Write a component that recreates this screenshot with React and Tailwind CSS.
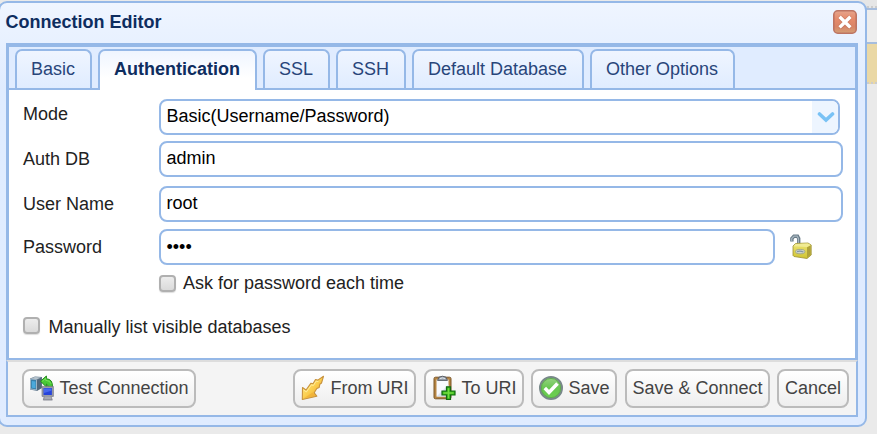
import React from "react";

const TABS = [
  { label: "Basic", size: "w-[77px]" },
  { label: "Authentication", size: "w-[159px]", active: true },
  { label: "SSL", size: "w-[67px]" },
  { label: "SSH", size: "w-[70px]" },
  { label: "Default Database", size: "w-[172px]" },
  { label: "Other Options", size: "w-[145px]" },
];

function CloseIcon() {
  return (
    <svg width="24" height="24" viewBox="0 0 24 24">
      <defs>
        <linearGradient id="close" x1="0" y1="0" x2="0" y2="1">
          <stop offset="0" stopColor="#e5a48c" />
          <stop offset=".35" stopColor="#e68b6c" />
          <stop offset=".7" stopColor="#d98467" />
          <stop offset="1" stopColor="#d3a077" />
        </linearGradient>
      </defs>
      <rect x=".8" y=".8" width="22.4" height="22.4" rx="4" fill="url(#close)" stroke="#bd7463" strokeWidth="1.6" />
      <path d="M7.8 8l8.4 8.4M16.2 8l-8.4 8.4" stroke="#a9614f" strokeWidth="5" strokeLinecap="round" opacity=".35" />
      <path d="M7.8 8l8.4 8.2M16.2 8l-8.4 8.2" stroke="#fff" strokeWidth="3.4" strokeLinecap="square" />
    </svg>
  );
}

function LockIcon() {
  return (
    <svg width="24" height="26" viewBox="0 0 24 26">
      <defs>
        <linearGradient id="lock" x1="0" y1="0" x2="0" y2="1">
          <stop offset="0" stopColor="#eee676" />
          <stop offset="1" stopColor="#cfc332" />
        </linearGradient>
      </defs>
      <path d="M2.9 7.500V4.500L5 2.200h3.500L9.700 4.500V11" fill="none" stroke="#687a87" strokeWidth="3.4" />
      <path d="M2.700 7.200V4.500L5 2.200h3.200L9.400 4.500V10" fill="none" stroke="#a5b4be" strokeWidth="1.3" />
      <path d="M4 12l2.500-2.500L19 9l3.200 2v10L18 24.500 5 22.500l-1-1z" fill="url(#lock)" stroke="#9c9136" strokeWidth=".8" />
      <path d="M18 13.200l3.800-2v9.500L18 24z" fill="#b0a33a" />
      <path d="M4.400 12.200L6.800 10l12-.6 2.800 1.600-3.600 2z" fill="#f1eb94" />
      <ellipse cx="11.200" cy="17.600" rx="4.700" ry="2.200" fill="#d0d5c8" stroke="#98a08a" strokeWidth=".8" />
      <path d="M8 17.600q3.200-1.200 6.400.4" stroke="#8496a5" strokeWidth="1.300" fill="none" />
    </svg>
  );
}

function TestIcon() {
  return (
    <svg width="26" height="26" viewBox="0 0 26 26">
      <path d="M1 3.5L6 1.5l7 .5v11l-5 3-7-1.5z" fill="#687f93" />
      <path d="M1.5 4l6 .6v10.3l-6-1z" fill="#397fa9" stroke="#b1c2d0" strokeWidth=".8" />
      <path d="M2.8 6l3.7.5v6.8l-3.7-.6z" fill="#4ba9dc" />
      <path d="M8 5l4.5-2.5V13L8 15.5z" fill="#52677a" />
      <path d="M1.8 3.5L6 2l6 .4L8 4.3z" fill="#b8c4cd" />
      <path d="M11.500 6.200L17.400 1v2.800q6.400.2 6.100 8.200h-4.600q.2-3-1.500-3v3z" fill="#48c936" stroke="#238a1c" />
      <path d="M13.3 6.3l3.400-3v2q4.400.2 5.400 3.500" fill="none" stroke="#7ee35f" strokeWidth=".9" />
      <path d="M13 11.400h11.400v10H22l1.300 3.700h-9l.9-3.700H13z" fill="#9a9ca6" stroke="#787b88" strokeWidth=".7" />
      <path d="M14.500 13h8.400v7h-8.400z" fill="#2744db" />
      <path d="M15 13.500h7.400v2.300L15 18z" fill="#4768ee" />
      <path d="M15.500 23h6.500" stroke="#b7b9c1" />
    </svg>
  );
}

function FromIcon() {
  return (
    <svg width="24" height="26" viewBox="0 0 24 26">
      <defs>
        <linearGradient id="from" x1="0" y1="0" x2="1" y2="1">
          <stop offset="0" stopColor="#fff19c" />
          <stop offset=".5" stopColor="#fbce4e" />
          <stop offset="1" stopColor="#e69824" />
        </linearGradient>
      </defs>
      <path
        d="M1.300 24.500L1.500 12.500 5 15l5-6.800 2 .6 2.500-4.300 2.300.6L22.500 1.300 20.500 8l-1.700 1.300-.6 3.200-2.400 1-2.600 4.300 2.600 3.400z"
        fill="url(#from)"
        stroke="#c7923e"
        strokeWidth="1.1"
        strokeLinejoin="round"
      />
      <path d="M2.600 15l2.800 1.900 5-7 2 .6 2.700-4.300 2.300.3" fill="none" stroke="#ffee9c" strokeWidth="1" />
      <path d="M3 23.200l8.500-5.700 2.300 3.300z" fill="#efae35" opacity=".7" />
    </svg>
  );
}

function ToIcon() {
  return (
    <svg width="24" height="26" viewBox="0 0 24 26">
      <rect x="2" y="2.2" width="17" height="21.6" rx="1.500" fill="#b58442" stroke="#7a5628" />
      <path d="M4.500 4.500h12v17h-12z" fill="#f8faff" />
      <path d="M4.500 21.500l12-12v12z" fill="#dbe4f0" />
      <path d="M5.500 5.400L7 2.200Q10.500.2 14 2.200l1.500 3.200z" fill="#99a2ad" stroke="#525861" strokeWidth=".9" />
      <path d="M7.800 3.600q2.800-1.400 5.400 0" stroke="#e4e9ee" fill="none" />
      <path d="M14.500 11.800h4V16H23v4h-4.500v4.500h-4V20H10v-4h4.500z" fill="#36b51c" stroke="#146a12" strokeWidth="1.2" />
      <path d="M16.500 13.200v10M11.400 18h10.200" stroke="#74dc40" strokeWidth="1.400" />
    </svg>
  );
}

function SaveIcon() {
  return (
    <svg width="26" height="26" viewBox="0 0 26 26">
      <defs>
        <linearGradient id="save" x1="0" y1="0" x2="0" y2="1">
          <stop offset="0" stopColor="#99d486" />
          <stop offset=".5" stopColor="#68c651" />
          <stop offset="1" stopColor="#6bd250" />
        </linearGradient>
      </defs>
      <circle cx="13" cy="13" r="11" fill="url(#save)" stroke="#788889" strokeWidth="2" />
      <circle cx="13" cy="13" r="9.600" fill="none" stroke="#5ea84d" strokeWidth=".9" />
      <path d="M6.800 13l4.200 4.500L19.500 8.500" fill="none" stroke="#fff" strokeWidth="3.500" />
    </svg>
  );
}

function Tab({ label, size, active }) {
  return (
    <div
      className={`${size} flex justify-center rounded-t-[7px] border-2 border-b-0 border-[#95b8e7] pt-[5px] pr-px leading-[27px] ${
        active
          ? "h-[41px] bg-linear-to-b from-[#eff5ff] to-white to-70% font-bold text-[#0e2d5f]"
          : "h-[39px] bg-linear-to-b from-[#eff5ff] to-[#e0ecff] text-[#28457a]"
      }`}
    >
      {label}
    </div>
  );
}

function Field({ label, row, labelPad, box }) {
  return (
    <div className={`flex items-start ${row}`}>
      <label className={`w-[136px] shrink-0 leading-[22px] text-[#222] ${labelPad}`}>{label}</label>
      {box}
    </div>
  );
}

function Input({ size, children }) {
  return (
    <div className={`${size} h-9 shrink-0 rounded-[8px] border-2 border-[#95b8e7] bg-white pl-[5.500px] leading-[30px] text-black`}>
      {children}
    </div>
  );
}

function Check() {
  return (
    <span className="h-[17px] w-[17px] shrink-0 rounded-[4px] border-2 border-[#b0b0b0] bg-linear-to-b from-[#ededed] to-[#dadada] shadow-[0_1px_1px_#ddd]" />
  );
}

function Button({ size, icon, pad, children }) {
  return (
    <button
      className={`${size} ${pad} flex h-[39px] shrink-0 items-center rounded-[8px] border-2 border-[#bbb] bg-linear-to-b from-white to-[#eee] pb-px whitespace-nowrap text-[#444]`}
    >
      {icon}
      <span className="pt-px">{children}</span>
    </button>
  );
}

export default function App() {
  return (
    <div className="relative h-[434px] w-[877px] overflow-hidden bg-[#eaeaea] font-['Liberation_Sans',Arial,sans-serif] text-[18px]">
      {/* Page behind the dialog */}
      <div className="ml-[860px] flex flex-col">
        <div className="h-2 border-b-2 border-dotted border-[#ccc] bg-[#e6e6e6]" />
        <div className="h-9 border-y-2 border-[#a6bddd] bg-[#ededed]" />
        <div className="h-10 border-b-2 border-dotted border-[#ccc] bg-[#ead8a5]" />
      </div>

      <div className="absolute top-px -left-[2px] flex h-[426px] w-[869px] flex-col rounded-[9px] border-2 border-[#95b8e7] bg-linear-to-b from-[#eff5ff] to-[#e0ecff] to-20% px-[6px]">
        <div className="flex h-10 shrink-0 items-start justify-between pr-[2px]">
          <h1 className="-ml-[0.500px] pt-[7px] leading-[24px] font-bold text-[#0e2d5f]">Connection Editor</h1>
          <div className="pt-[7px]">
            <CloseIcon />
          </div>
        </div>

        <div className="flex h-[317px] w-[852px] shrink-0 flex-col border-x-[3px] border-t-4 border-b-2 border-[#95b8e7] bg-white">
          <div className="flex h-[43px] shrink-0 items-start gap-[6px] border-b-2 border-[#95b8e7] bg-[#e0ecff] pt-[2px] pl-[6px]">
            {TABS.map((t) => (
              <Tab key={t.label} {...t} />
            ))}
          </div>
          <div className="flex flex-col pt-[9px] pl-[14px]">
            <Field
              label="Mode"
              row="h-[42px]"
              labelPad="pt-1"
              box={
                <div className="flex h-9 w-[681px] overflow-hidden rounded-[8px] border-2 border-[#95b8e7] pl-[5.500px] leading-[30px] text-black">
                  <span className="w-[645.500px] shrink-0">Basic(Username/Password)</span>
                  <span className="flex h-8 w-[26px] shrink-0 items-center justify-center bg-[#edf5ff] pl-[2px]">
                    <svg width="18" height="12" viewBox="0 0 18 12">
                      <path d="M2.500 3L9 9l6.500-6" fill="none" stroke="#79c2f5" strokeWidth="3.600" strokeLinecap="round" />
                    </svg>
                  </span>
                </div>
              }
            />
            <Field label="Auth DB" row="h-[45px]" labelPad="pt-[7px]" box={<Input size="w-[684px]">admin</Input>} />
            <Field label="User Name" row="h-[43px]" labelPad="pt-[7px]" box={<Input size="w-[684px]">root</Input>} />
            <Field
              label="Password"
              row="h-[46px]"
              labelPad="pt-[7px]"
              box={
                <>
                  <Input size="w-[616px]">
                    <span className="inline-block pt-px">••••</span>
                  </Input>
                  <div className="pt-[5px] pl-[14px]">
                    <LockIcon />
                  </div>
                </>
              }
            />
            <div className="flex h-[42px] items-start pl-[136px]">
              <Check />
              <span className="-mt-[3px] pl-[7px] leading-[22px] text-[#222]">Ask for password each time</span>
            </div>
            <div className="flex items-start">
              <Check />
              <span className="-mt-px pl-[8.500px] leading-[22px] text-[#222]">Manually list visible databases</span>
            </div>
          </div>
        </div>

        <div className="flex h-[57px] w-[852px] shrink-0 items-start border-2 border-[#95b8e7] border-t-[#ddd] bg-[#f4f4f4] pt-[7px] pl-[14px]">
          <Button size="w-[174px]" pad="pl-[5px] gap-[4.500px]" icon={<TestIcon />}>Test Connection</Button>
          <div className="flex pl-[97px]">
            <Button size="w-[123px]" pad="pl-[6px] gap-[5.500px]" icon={<FromIcon />}>From URI</Button>
            <div className="w-2" />
            <Button size="w-[100px]" pad="pl-[6px] gap-[5.500px]" icon={<ToIcon />}>To URI</Button>
            <div className="w-[7px]" />
            <Button size="w-[86px]" pad="pl-[5px] gap-[4.500px]" icon={<SaveIcon />}>Save</Button>
            <div className="w-2" />
            <Button size="w-[145px]" pad="justify-center">Save &amp; Connect</Button>
            <div className="w-[7px]" />
            <Button size="w-[72px]" pad="justify-center">Cancel</Button>
          </div>
        </div>
      </div>
    </div>
  );
}
